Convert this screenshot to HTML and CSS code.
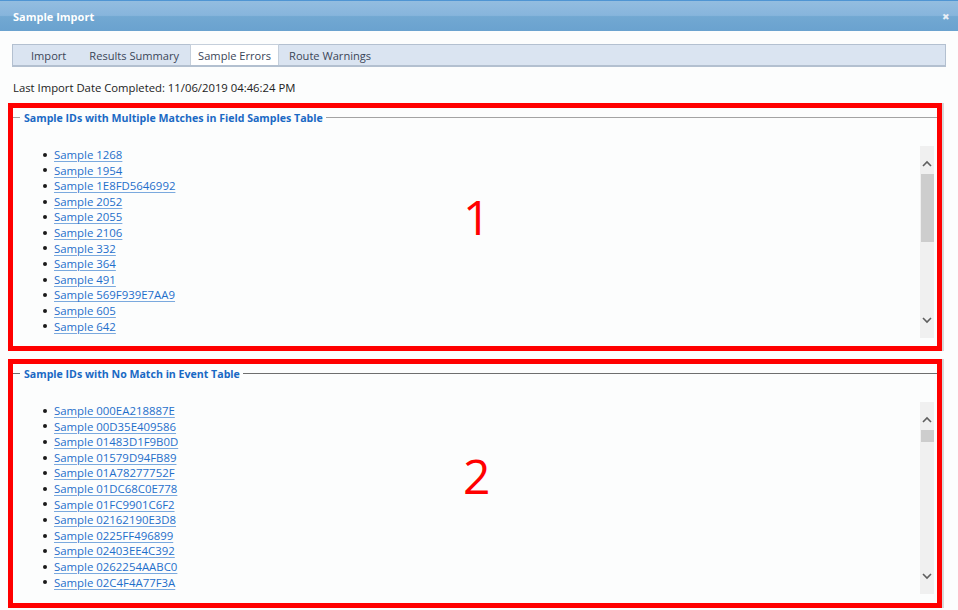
FILE: index.html
```html
<!DOCTYPE html>
<html>
<head>
<meta charset="utf-8">
<link rel="stylesheet" href="styles.css">
</head>
<body>
<div class="titlebar">
  <span class="title">Sample Import</span>
  <span class="close">&#x2716;</span>
</div>
<div class="tabs">
  <span class="tab t-import">Import</span>
  <span class="tab t-results">Results Summary</span>
  <span class="tab t-errors active">Sample Errors</span>
  <span class="tab t-route">Route Warnings</span>
</div>
<div class="lastimport">Last Import Date Completed: 11/06/2019 04:46:24 PM</div>

<section class="box box1">
  <div class="legend"><span class="lline short"></span><span class="ltext">Sample IDs with Multiple Matches in Field Samples Table</span><span class="lline long"></span></div>
  <div class="scrollwrap">
    <ul class="list">
      <li><a href="#">Sample 1268</a></li>
      <li><a href="#">Sample 1954</a></li>
      <li><a href="#">Sample 1E8FD5646992</a></li>
      <li><a href="#">Sample 2052</a></li>
      <li><a href="#">Sample 2055</a></li>
      <li><a href="#">Sample 2106</a></li>
      <li><a href="#">Sample 332</a></li>
      <li><a href="#">Sample 364</a></li>
      <li><a href="#">Sample 491</a></li>
      <li><a href="#">Sample 569F939E7AA9</a></li>
      <li><a href="#">Sample 605</a></li>
      <li><a href="#">Sample 642</a></li>
      <li><a href="#">Sample 687</a></li>
    </ul>
    <div class="scrollbar">
      <svg class="arrow" width="14" height="10" viewBox="0 0 14 10"><path d="M3 7 L7 3 L11 7" fill="none" stroke="#5f5f5f" stroke-width="1.6"/></svg>
      <div class="track"><div class="thumb thumb1"></div></div>
      <svg class="arrow" width="14" height="10" viewBox="0 0 14 10"><path d="M3 3 L7 7 L11 3" fill="none" stroke="#5f5f5f" stroke-width="1.6"/></svg>
    </div>
  </div>
  <span class="marker">1</span>
</section>

<section class="box box2">
  <div class="legend"><span class="lline short dark"></span><span class="ltext">Sample IDs with No Match in Event Table</span><span class="lline long dark"></span></div>
  <div class="scrollwrap">
    <ul class="list">
      <li><a href="#">Sample 000EA218887E</a></li>
      <li><a href="#">Sample 00D35E409586</a></li>
      <li><a href="#">Sample 01483D1F9B0D</a></li>
      <li><a href="#">Sample 01579D94FB89</a></li>
      <li><a href="#">Sample 01A78277752F</a></li>
      <li><a href="#">Sample 01DC68C0E778</a></li>
      <li><a href="#">Sample 01FC9901C6F2</a></li>
      <li><a href="#">Sample 02162190E3D8</a></li>
      <li><a href="#">Sample 0225FF496899</a></li>
      <li><a href="#">Sample 02403EE4C392</a></li>
      <li><a href="#">Sample 0262254AABC0</a></li>
      <li><a href="#">Sample 02C4F4A77F3A</a></li>
      <li><a href="#">Sample 02D5E1A4B7C9</a></li>
    </ul>
    <div class="scrollbar">
      <svg class="arrow" width="14" height="10" viewBox="0 0 14 10"><path d="M3 7 L7 3 L11 7" fill="none" stroke="#5f5f5f" stroke-width="1.6"/></svg>
      <div class="track"><div class="thumb thumb2"></div></div>
      <svg class="arrow" width="14" height="10" viewBox="0 0 14 10"><path d="M3 3 L7 7 L11 3" fill="none" stroke="#5f5f5f" stroke-width="1.6"/></svg>
    </div>
  </div>
  <span class="marker">2</span>
</section>
</body>
</html>
```

FILE: styles.css
```css
* { box-sizing: border-box; }
html, body { margin: 0; padding: 0; }
body {
  width: 958px;
  height: 610px;
  overflow: hidden;
  background: #fcfdfd;
  font-family: "Open Sans", "Noto Sans", sans-serif;
  font-size: 11px;
  color: #222;
}
.titlebar {
  height: 31px;
  border-top: 1px solid #4f95d3;
  background: linear-gradient(to bottom, #93bde0 0%, #87b5dc 48%, #72a8d2 52%, #6aa2cf 100%);
  display: flex;
  align-items: center;
  justify-content: space-between;
  padding: 0 8px 0 13px;
}
.title {
  color: #fff;
  font-weight: bold;
  font-size: 11px;
}
.close {
  color: #e8eef5;
  font-size: 9px;
  margin-top: 1px;
}
.tabs {
  margin: 13px 12px 0 12px;
  height: 23px;
  background: #dae4f1;
  border: 1px solid #b3c0d0;
  border-bottom-width: 2px;
  display: flex;
  align-items: stretch;
  color: #3a4658;
}
.tab {
  display: flex;
  align-items: center;
  padding: 0 7px;
  font-size: 11.1px;
}
.t-import { margin-left: 11px; }
.t-results { margin-left: 9px; }
.t-errors { margin-left: 4px; }
.t-route { margin-left: 3px; }
.tab.active {
  background: #fff;
  border: 1px solid #c5cfdb;
  border-bottom: none;
  margin-top: -1px;
}
.lastimport {
  margin: 13px 0 0 13px;
  height: 15px;
  line-height: 15px;
  font-size: 11.3px;
  color: #222;
}
.box {
  position: relative;
  margin: 8px 0 0 8px;
  width: 934px;
  border: 5px solid #ff0000;
  box-shadow: 2px 0 0 #d8d8d8;
}
.box1 { height: 248px; margin-top: 8px; }
.box2 { height: 249px; margin-top: 8px; }
.legend {
  display: flex;
  align-items: center;
  height: 17px;
  margin-top: 1px;
}
.lline { height: 1px; background: #a3a3a3; }
.lline.dark { background: #6e6e6e; }
.lline.short { width: 7px; }
.lline.long { flex: 1; }
.ltext {
  color: #1a69c4;
  font-weight: bold;
  font-size: 10.6px;
  padding: 0 3px 0 4px;
}
.scrollwrap {
  display: flex;
  margin: 20px 3px 0 0;
  height: 192px;
}
.list {
  flex: 1;
  list-style: none;
  margin: 0;
  padding: 1px 0 0 30px;
  overflow: hidden;
}
.list li {
  height: 15.6px;
  line-height: 15.6px;
  display: flex;
  align-items: center;
  font-size: 11.4px;
}
.list li::before {
  content: "";
  width: 4px;
  height: 4px;
  border-radius: 50%;
  background: #1a1a1a;
  margin-right: 7px;
}
.list a {
  color: #1f6fcb;
  text-decoration: underline;
  text-decoration-color: #7aa9de;
  text-underline-offset: 2px;
}
.scrollbar {
  width: 14px;
  background: #f0f0f0;
  display: flex;
  flex-direction: column;
  align-items: center;
  padding: 13px 0 13px 0;
}
.arrow { display: block; }
.track {
  flex: 1;
  width: 13px;
  position: relative;
}
.thumb {
  position: absolute;
  left: 0;
  width: 13px;
  background: #cdcdcd;
}
.thumb1 { top: 5px; height: 68px; }
.thumb2 { top: 5px; height: 12px; }
.marker {
  position: absolute;
  left: 450px;
  color: #ff0000;
  font-family: "Open Sans", sans-serif;
  font-size: 48px;
  line-height: 1;
}
.box1 .marker { top: 85px; }
.box2 .marker { top: 88px; }
```
